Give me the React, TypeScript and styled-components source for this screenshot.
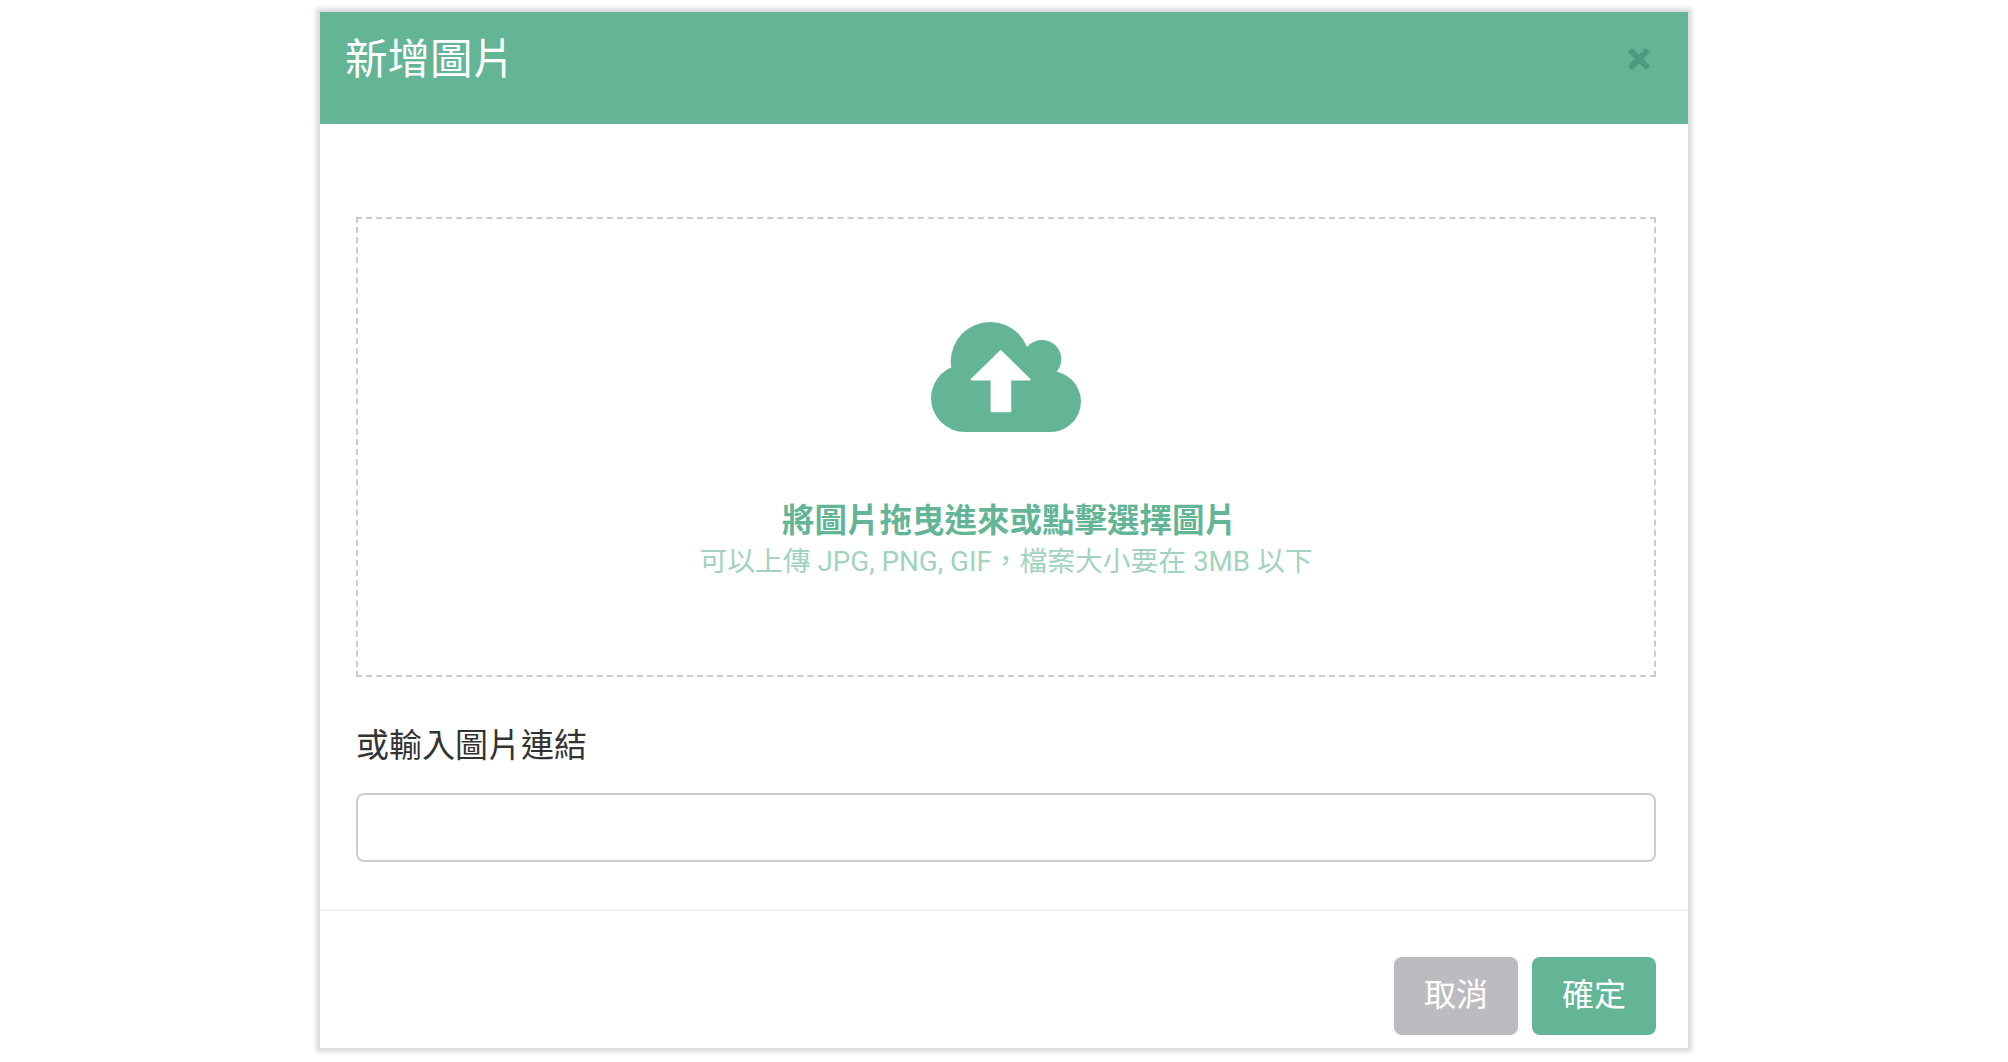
import React from "react";
import styled, { createGlobalStyle } from "styled-components";

const GlobalStyle = createGlobalStyle`
  html, body {
    margin: 0;
    padding: 0;
    background: #fff;
  }
  body {
    font-family: Roboto, "Noto Sans CJK TC", sans-serif;
  }
  #root {
    height: 1062px;
    padding-top: 12px;
  }
  * {
    box-sizing: border-box;
  }
`;

const UploadCloud = () => (
  <CloudSvg viewBox="0 0 443 325">
    <circle cx="175" cy="117" r="117" fill="#63b595" />
    <circle cx="328" cy="110" r="57" fill="#63b595" />
    <circle cx="100" cy="225" r="100" fill="#63b595" />
    <circle cx="353" cy="235" r="90" fill="#63b595" />
    <rect x="100" y="145" width="253" height="180" fill="#63b595" />
    <path
      d="M206 86 L291 170 H234 V264 H179 V170 H120 Z"
      fill="#fff"
      stroke="#fff"
      strokeWidth="6"
      strokeLinejoin="round"
    />
  </CloudSvg>
);

const App: React.FC = () => (
  <>
    <GlobalStyle />
    <Modal>
      <Header>
        <Title>新增圖片</Title>
        <CloseButton aria-label="close">
          <svg width="24" height="24" viewBox="0 0 24 24">
            <path d="M3 3 L21 21 M21 3 L3 21" stroke="#4d9a7e" strokeWidth="6" />
          </svg>
        </CloseButton>
      </Header>
      <Body>
        <DropZone>
          <UploadCloud />
          <DropTitle>將圖片拖曳進來或點擊選擇圖片</DropTitle>
          <DropHint>{"可以上傳 JPG, PNG, GIF\uFF0C檔案大小要在 3MB 以下"}</DropHint>
        </DropZone>
        <Label>或輸入圖片連結</Label>
        <UrlInput type="text" />
      </Body>
      <Footer>
        <ActionButton $variant="cancel">取消</ActionButton>
        <ActionButton $variant="confirm">確定</ActionButton>
      </Footer>
    </Modal>
  </>
);

export default App;

const CloudSvg = styled.svg`
  width: 150px;
  height: 110px;
  flex: none;
`;

const Modal = styled.div`
  width: 1368px;
  height: 1036px;
  margin: 0 auto;
  background: #fff;
  box-shadow: 0 0 4px 4px #dedcdf;
`;

const Header = styled.header`
  height: 112px;
  padding: 0 37px 0 25px;
  display: flex;
  align-items: flex-start;
  justify-content: space-between;
  background: #63b595;
`;

const Title = styled.h1`
  margin: 20px 0 0;
  font-size: 42.5px;
  line-height: 56px;
  font-weight: 400;
  color: #fff;
`;

const CloseButton = styled.button`
  margin-top: 35px;
  padding: 0;
  width: 24px;
  height: 24px;
  border: 0;
  background: none;
  display: flex;
`;

const Body = styled.div`
  padding: 93px 32px 47px 36px;
  border-bottom: 2px solid #f0eef1;
`;

const DropZone = styled.div`
  height: 460px;
  padding-top: 103px;
  display: flex;
  flex-direction: column;
  align-items: center;
  border: 2px dashed #cccbcd;
`;

const DropTitle = styled.div`
  margin-top: 67px;
  padding-left: 7px;
  font-size: 32.5px;
  line-height: 44px;
  font-weight: 700;
  color: #63b595;
`;

const DropHint = styled.div`
  font-size: 27.75px;
  line-height: 38px;
  color: #a1d3bf;
`;

const Label = styled.div`
  margin: 46px 0 24px;
  font-size: 33px;
  line-height: 46px;
  color: #333;
`;

const UrlInput = styled.input`
  display: block;
  width: 100%;
  height: 69px;
  border: 2px solid #cccbcd;
  border-radius: 8px;
  outline: none;
  background: #fff;
`;

const Footer = styled.footer`
  padding: 46px 32px 0 0;
  display: flex;
  justify-content: flex-end;
  gap: 14px;
`;

const ActionButton = styled.button<{ $variant: "cancel" | "confirm" }>`
  width: 124px;
  height: 78px;
  padding: 0 0 8px;
  border: 0;
  border-radius: 8px;
  font-family: inherit;
  font-size: 32px;
  color: #fff;
  background: ${(p) => (p.$variant === "cancel" ? "#bdbbbf" : "#63b595")};
`;
